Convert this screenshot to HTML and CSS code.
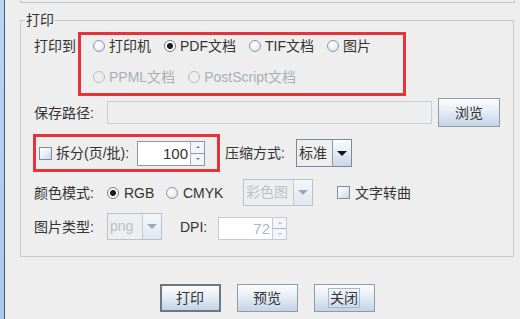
FILE: index.html
```html
<!DOCTYPE html>
<html lang="zh-CN">
<head>
<meta charset="utf-8">
<link rel="stylesheet" href="styles.css">
</head>
<body>
<div class="window">
  <div class="edge"></div>
  <div class="main">
    <div class="prev-panel"></div>
    <div class="group">
      <span class="group-title">打印</span>

      <div class="row row-target">
        <span class="label-target">打印到</span>
        <div class="mark mark-target">
          <div class="opts">
            <span class="opt"><span class="radio"></span>打印机</span>
            <span class="opt"><span class="radio on"></span>PDF文档</span>
            <span class="opt"><span class="radio"></span>TIF文档</span>
            <span class="opt"><span class="radio"></span>图片</span>
          </div>
          <div class="opts is-disabled">
            <span class="opt"><span class="radio"></span>PPML文档</span>
            <span class="opt"><span class="radio"></span>PostScript文档</span>
          </div>
        </div>
      </div>

      <div class="row row-path">
        <span class="label">保存路径:</span>
        <span class="field field-path"></span>
        <span class="btn btn-browse">浏览</span>
      </div>

      <div class="row row-split">
        <div class="mark mark-split">
          <span class="check"></span>
          <span class="split-label">拆分(页/批):</span>
          <div class="spinner spinner-split">
            <span class="spin-val">100</span>
            <span class="spin-arrows"><span class="spin-up"></span><span class="spin-down"></span></span>
          </div>
        </div>
        <span class="label-compress">压缩方式:</span>
        <div class="combo combo-std">
          <span class="combo-val">标准</span>
          <span class="combo-arrow"><span class="tri"></span></span>
        </div>
      </div>

      <div class="row row-color">
        <span class="label">颜色模式:</span>
        <span class="opt opt-rgb"><span class="radio on"></span>RGB</span>
        <span class="opt opt-cmyk"><span class="radio"></span>CMYK</span>
        <div class="combo combo-color is-disabled">
          <span class="combo-val">彩色图</span>
          <span class="combo-arrow"><span class="tri"></span></span>
        </div>
        <span class="check check-text"></span>
        <span class="check-label">文字转曲</span>
      </div>

      <div class="row row-image">
        <span class="label">图片类型:</span>
        <div class="combo combo-png is-disabled">
          <span class="combo-val">png</span>
          <span class="combo-arrow"><span class="tri"></span></span>
        </div>
        <span class="label-dpi">DPI:</span>
        <div class="spinner spinner-dpi is-disabled">
          <span class="spin-val">72</span>
          <span class="spin-arrows"><span class="spin-up"></span><span class="spin-down"></span></span>
        </div>
      </div>
    </div>

    <div class="actions">
      <span class="btn btn-default">打印</span>
      <span class="btn">预览</span>
      <span class="btn"><span class="focus">关闭</span></span>
    </div>
  </div>
</div>
</body>
</html>
```

FILE: styles.css
```css
html, body {
  margin: 0;
  padding: 0;
}

body {
  width: 520px;
  height: 319px;
  overflow: hidden;
  background: #eeeeee;
  font-family: "Liberation Sans", "Noto Sans CJK SC", sans-serif;
  font-size: 14px;
  color: #333333;
}

.window {
  display: flex;
  height: 319px;
}

.edge {
  width: 4px;
  background: linear-gradient(#b9d6f3, #a9c9ec);
  border-right: 1px solid #46586c;
  flex: none;
}

.main {
  flex: 1;
}

.prev-panel {
  margin-left: 15px;
  width: 495px;
  height: 3px;
  box-sizing: border-box;
  border: 1px solid #bfc6cd;
  border-top: none;
}

.group {
  position: relative;
  margin: 17px 0 0 15px;
  width: 494px;
  box-sizing: border-box;
  border: 1px solid #c4cad0;
  padding: 0 0 16px 13px;
}

.group-title {
  position: absolute;
  top: -9px;
  left: 4px;
  padding: 0 1px;
  background: #eeeeee;
  line-height: 16px;
}

.row {
  display: flex;
  align-items: center;
}

.label {
  width: 73px;
  flex: none;
  line-height: 20px;
  white-space: nowrap;
}

/* annotation boxes */
.mark {
  border: 3px solid #e5323b;
  box-sizing: border-box;
}

/* row: print target */
.row-target {
  margin-top: 11px;
  align-items: flex-start;
}

.label-target {
  width: 44px;
  margin-top: 3px;
  line-height: 22px;
  white-space: nowrap;
}

.mark-target {
  width: 328px;
  height: 64px;
  padding-left: 12px;
  display: flex;
  flex-direction: column;
  gap: 9px;
}

.opts {
  display: flex;
  align-items: center;
  height: 22px;
}

.opt {
  display: flex;
  align-items: center;
  gap: 4px;
  margin-right: 13px;
  white-space: nowrap;
  line-height: 20px;
}

.radio {
  width: 12px;
  height: 12px;
  box-sizing: border-box;
  border-radius: 50%;
  border: 1px solid #8c99a6;
  background: radial-gradient(circle at 40% 35%, #ffffff 0, #f4f7fa 35%, #c9d8e8 100%);
  flex: none;
}

.radio.on {
  border-color: #6f7c89;
  background: radial-gradient(circle, #1e1e1e 0, #1e1e1e 2.6px, #ffffff 3.4px, #f4f6f9 100%);
}

.is-disabled {
  color: #a9aeb3;
}

.is-disabled .radio {
  border-color: #b4bcc4;
  background: #eeeeee;
}

/* row: save path */
.row-path {
  margin-top: 2px;
  height: 29px;
}

.field {
  box-sizing: border-box;
  border: 1px solid #c6ced6;
  background: #eeeeee;
}

.field-path {
  width: 325px;
  height: 23px;
}

.btn {
  display: flex;
  align-items: center;
  justify-content: center;
  box-sizing: border-box;
  width: 61px;
  height: 28px;
  border: 1px solid #8d9aa7;
  background: linear-gradient(#fbfcfe 0%, #e6edf5 45%, #c2d3e6 100%);
  line-height: 18px;
  color: #333333;
  flex: none;
}

.btn-browse {
  margin-left: 6px;
  width: 62px;
  height: 29px;
}

.btn-default {
  border: 2px solid #6c7782;
}

.focus {
  border: 1px solid #a8b8c8;
  padding: 0 1px;
  line-height: 18px;
}

/* row: split */
.row-split {
  margin-top: 7px;
}

.mark-split {
  margin-left: -1px;
  width: 187px;
  height: 38px;
  display: flex;
  align-items: center;
  padding-left: 3px;
}

.check {
  width: 13px;
  height: 13px;
  box-sizing: border-box;
  border: 1px solid #7f8c99;
  background: linear-gradient(135deg, #ffffff 0%, #eef3f8 40%, #c6d6e8 100%);
  flex: none;
}

.split-label {
  margin-left: 4px;
  white-space: nowrap;
  line-height: 20px;
}

.spinner {
  display: flex;
  box-sizing: border-box;
  border: 1px solid #8d98a3;
  background: #ffffff;
  flex: none;
}

.spinner-split {
  margin-left: auto;
  margin-right: 12px;
  width: 68px;
  height: 25px;
}

.spin-val {
  flex: 1;
  text-align: right;
  padding-right: 2px;
  line-height: 23px;
  font-size: 15px;
}

.spin-arrows {
  width: 13px;
  display: flex;
  flex-direction: column;
  border-left: 1px solid #a7b2bd;
  background: #f3f5f8;
}

.spin-up,
.spin-down {
  flex: 1;
  position: relative;
}

.spin-up {
  border-bottom: 1px solid #8f9aa5;
}

.spin-up::after,
.spin-down::after {
  content: "";
  position: absolute;
  left: 50%;
  top: 50%;
  margin-left: -2px;
  border-left: 2px solid transparent;
  border-right: 2px solid transparent;
}

.spin-up::after {
  margin-top: -1px;
  border-bottom: 2px solid #6a747e;
}

.spin-down::after {
  margin-top: -1px;
  border-top: 2px solid #6a747e;
}

.label-compress {
  margin-left: 5px;
  width: 71px;
  white-space: nowrap;
  line-height: 20px;
}

.combo {
  display: flex;
  box-sizing: border-box;
  border: 1px solid #7c8996;
  height: 28px;
  background: #eeeeee;
  flex: none;
}

.combo-val {
  flex: 1;
  padding-left: 2px;
  line-height: 26px;
  white-space: nowrap;
  overflow: hidden;
}

.combo-arrow {
  width: 18px;
  border-left: 1px solid #8d9aa7;
  background: linear-gradient(#fbfcfe 0%, #e6edf5 45%, #c7d6e8 100%);
  display: flex;
  align-items: center;
  justify-content: center;
}

.tri {
  width: 0;
  height: 0;
  border-left: 5px solid transparent;
  border-right: 5px solid transparent;
  border-top: 5px solid #111111;
}

.combo-std {
  width: 56px;
}

.combo.is-disabled {
  border-color: #b7c2cd;
  height: 27px;
}

.combo.is-disabled .combo-val {
  color: #b9c1c9;
  line-height: 25px;
}

.combo.is-disabled .combo-arrow {
  border-left-color: #c2ccd6;
  background: linear-gradient(#f4f7fa, #dfe7f0);
}

.combo.is-disabled .tri {
  border-top-color: #9ea9b4;
}

/* row: colour mode */
.row-color {
  margin-top: 7px;
  height: 27px;
}

.opt-rgb {
  width: 59px;
  margin-right: 0;
  gap: 5px;
}

.opt-cmyk {
  width: 77px;
  margin-right: 0;
  gap: 5px;
}

.combo-color {
  width: 70px;
}

.check-text {
  margin-left: 24px;
}

.check-label {
  margin-left: 5px;
  line-height: 20px;
  white-space: nowrap;
}

/* row: image type */
.row-image {
  margin-top: 7px;
  height: 27px;
}

.combo-png {
  width: 55px;
}

.label-dpi {
  margin-left: 18px;
  width: 38px;
  line-height: 20px;
}

.spinner-dpi {
  align-self: flex-end;
  width: 69px;
  height: 23px;
  border-color: #c3ccd5;
}

.spinner-dpi .spin-val {
  color: #b0b7be;
  line-height: 21px;
}

.spinner-dpi .spin-arrows {
  border-left-color: #c3ccd5;
}

.spinner-dpi .spin-up {
  border-bottom-color: #aab4be;
}

.spinner-dpi .spin-up::after {
  border-bottom-color: #b5bec7;
}

.spinner-dpi .spin-down::after {
  border-top-color: #b5bec7;
}

/* bottom buttons */
.actions {
  margin: 27px 0 0 15px;
  width: 494px;
  display: flex;
  justify-content: center;
  gap: 16px;
}
```
